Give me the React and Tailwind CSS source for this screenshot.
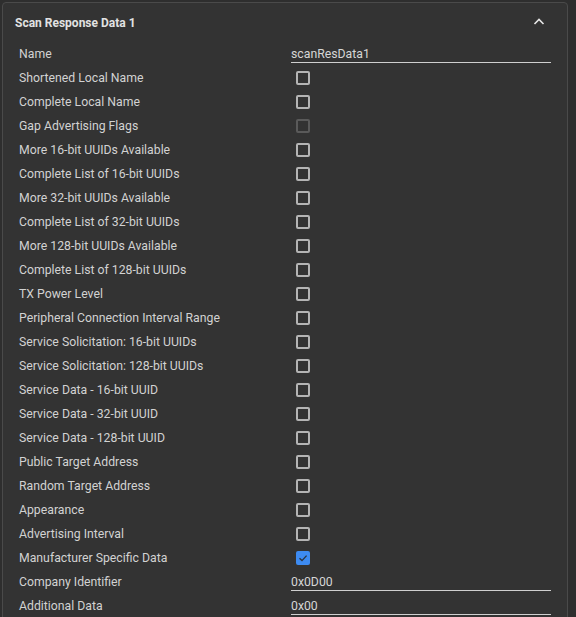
import React from "react";

const rows = [
  { label: "Name", type: "text", value: "scanResData1" },
  { label: "Shortened Local Name", type: "check" },
  { label: "Complete Local Name", type: "check" },
  { label: "Gap Advertising Flags", type: "check", disabled: true },
  { label: "More 16-bit UUIDs Available", type: "check" },
  { label: "Complete List of 16-bit UUIDs", type: "check" },
  { label: "More 32-bit UUIDs Available", type: "check" },
  { label: "Complete List of 32-bit UUIDs", type: "check" },
  { label: "More 128-bit UUIDs Available", type: "check" },
  { label: "Complete List of 128-bit UUIDs", type: "check" },
  { label: "TX Power Level", type: "check" },
  { label: "Peripheral Connection Interval Range", type: "check" },
  { label: "Service Solicitation: 16-bit UUIDs", type: "check" },
  { label: "Service Solicitation: 128-bit UUIDs", type: "check" },
  { label: "Service Data - 16-bit UUID", type: "check" },
  { label: "Service Data - 32-bit UUID", type: "check" },
  { label: "Service Data - 128-bit UUID", type: "check" },
  { label: "Public Target Address", type: "check" },
  { label: "Random Target Address", type: "check" },
  { label: "Appearance", type: "check" },
  { label: "Advertising Interval", type: "check" },
  { label: "Manufacturer Specific Data", type: "check", checked: true },
  { label: "Company Identifier", type: "text", value: "0x0D00" },
  { label: "Additional Data", type: "text", value: "0x00" },
];

function Checkbox({ checked, disabled }) {
  if (checked) {
    return (
      <div className="ml-[5px] flex h-[14px] w-[14px] items-center justify-center rounded-[2px] bg-[#3d8bf2]">
        <svg width="10" height="10" viewBox="0 0 10 10" fill="none">
          <path d="M1.5 5.2 L4 7.6 L8.6 2.6" stroke="#2b3440" strokeWidth="1.4" />
        </svg>
      </div>
    );
  }
  return (
    <div
      className={
        "ml-[5px] h-[14px] w-[14px] rounded-[2px] border-2 " +
        (disabled ? "border-[#5a5a5a]" : "border-[#b4b4b4]")
      }
    />
  );
}

function TextField({ value }) {
  return (
    <div className="h-[21px] w-[260px] self-start border-b border-[#cfcfcf] leading-6 text-[#d6d6d6]">
      {value}
    </div>
  );
}

export default function App() {
  return (
    <div
      className="h-[617px] w-[576px] overflow-hidden bg-[#2e2e2e] pl-[2px] pt-[2px]"
      style={{ fontFamily: "Roboto, 'Liberation Sans', sans-serif" }}
    >
      <div className="h-[700px] w-[566px] rounded-[4px] border border-[#4a4a4a] bg-[#333333]">
        <div className="flex h-[39px] items-center justify-between pl-[12px] pr-[22px]">
          <span className="text-[12px] font-bold text-[#e2e2e2]">Scan Response Data 1</span>
          <svg width="12" height="8" viewBox="0 0 12 8" fill="none" className="mb-[2px]">
            <path d="M1.5 6 L6 1.5 L10.5 6" stroke="#e6e6e6" strokeWidth="1.6" />
          </svg>
        </div>
        <div className="flex flex-col pl-[16px] text-[12.25px] text-[#d2d2d2]">
          {rows.map((r) => (
            <div key={r.label} className="flex h-6 items-center">
              <div className="w-[272px] leading-6">{r.label}</div>
              {r.type === "text" ? (
                <TextField value={r.value} />
              ) : (
                <Checkbox checked={r.checked} disabled={r.disabled} />
              )}
            </div>
          ))}
        </div>
      </div>
    </div>
  );
}
